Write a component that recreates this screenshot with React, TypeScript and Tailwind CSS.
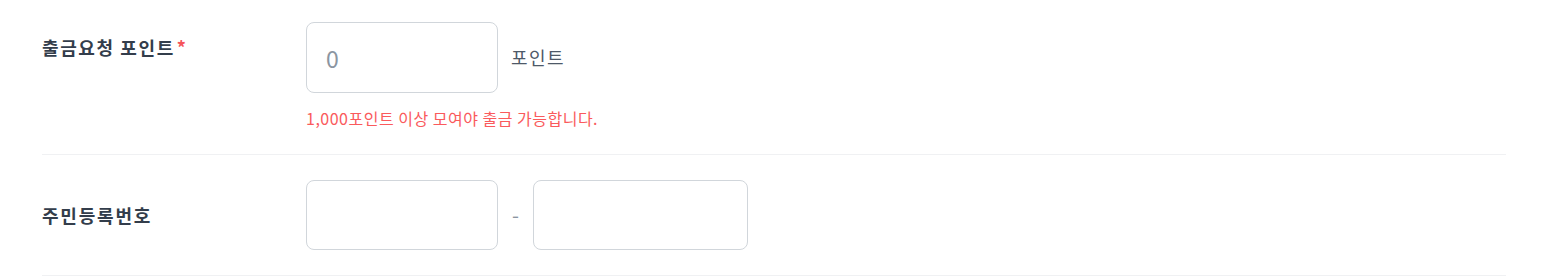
import React from 'react';

const font = { fontFamily: '"Noto Sans CJK KR", "Noto Sans", sans-serif' };

export default function App() {
  return (
    <div className="w-[1548px] h-[279px] bg-white" style={font}>
      <div className="ml-[42px] w-[1464px]">
        {/* 출금요청 포인트 */}
        <div className="flex items-start pt-[22px] pb-[25px] border-b border-[#f0f1f3]">
          <div className="w-[264px] shrink-0 mt-[12px] text-[18px] font-bold tracking-[1.6px] text-[#333d4b] leading-[26px]">
            출금요청 포인트<span className="ml-[2px] text-[#f5545a]">*</span>
          </div>
          <div className="flex flex-col">
            <div className="flex items-center gap-[13px]">
              <input
                placeholder="0"
                className="w-[192px] h-[71px] rounded-[8px] border border-[#d1d6db] px-[19px] text-[23px] text-[#333d4b] placeholder:text-[#8b95a1] outline-none"
                style={font}
              />
              <span className="text-[18px] tracking-[1.5px] text-[#4e5968]">포인트</span>
            </div>
            <p className="mt-[14px] text-[16px] tracking-[0.5px] leading-[22px] text-[#fa5a5c]">
              1,000포인트 이상 모여야 출금 가능합니다.
            </p>
          </div>
        </div>

        {/* 주민등록번호 */}
        <div className="flex items-center py-[25px] border-b border-[#f0f1f3]">
          <div className="w-[264px] shrink-0 text-[18px] font-bold tracking-[1.8px] text-[#333d4b] leading-[26px]">
            주민등록번호
          </div>
          <div className="flex items-center">
            <input
              className="w-[192px] h-[70px] rounded-[8px] border border-[#d1d6db] px-[19px] text-[20px] outline-none"
              style={font}
            />
            <span className="w-[35px] text-center text-[20px] text-[#8b95a1]">-</span>
            <input
              className="w-[215px] h-[70px] rounded-[8px] border border-[#d1d6db] px-[19px] text-[20px] outline-none"
              style={font}
            />
          </div>
        </div>
      </div>
    </div>
  );
}
